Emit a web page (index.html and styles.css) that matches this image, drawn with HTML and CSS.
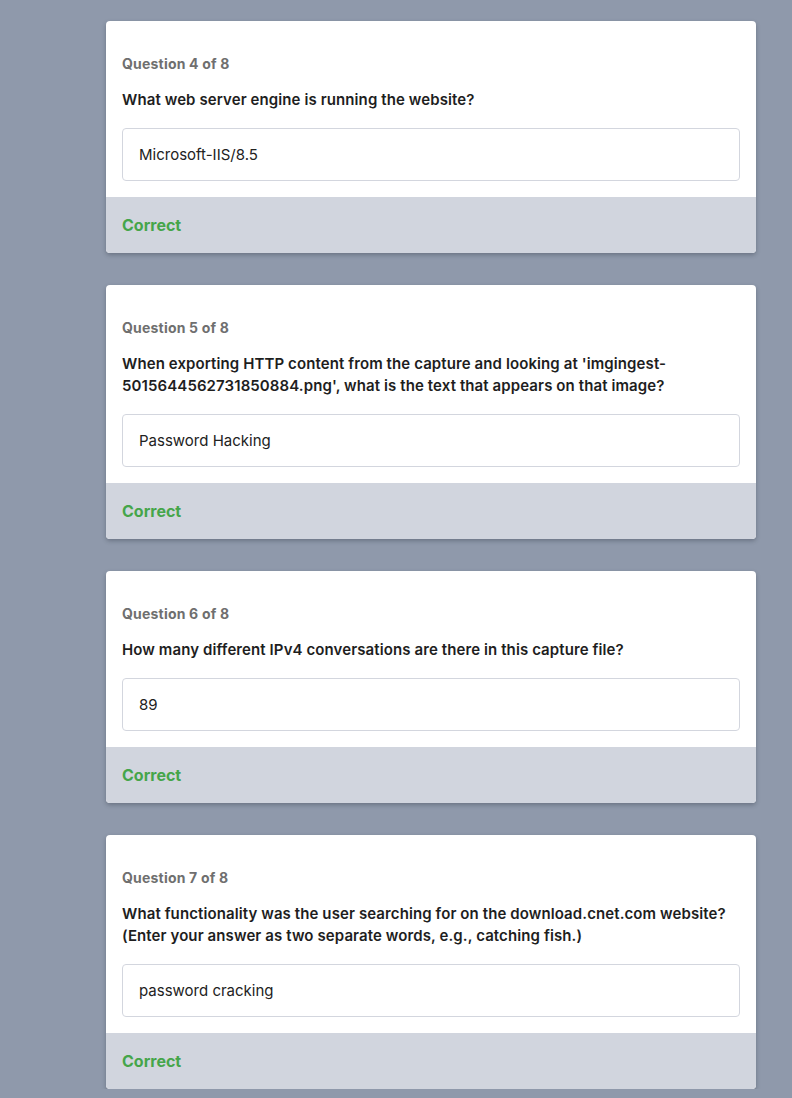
FILE: index.html
```html
<!DOCTYPE html>
<html>
<head>
<meta charset="utf-8">
<link rel="stylesheet" href="styles.css">
</head>
<body>
<div class="list">
  <div class="card">
    <div class="body">
      <div class="label">Question 4 of 8</div>
      <div class="question">What web server engine is running the website?</div>
      <div class="answer">Microsoft-IIS/8.5</div>
    </div>
    <div class="footer">Correct</div>
  </div>
  <div class="card">
    <div class="body">
      <div class="label">Question 5 of 8</div>
      <div class="question">When exporting HTTP content from the capture and looking at 'imgingest-5015644562731850884.png', what is the text that appears on that image?</div>
      <div class="answer">Password Hacking</div>
    </div>
    <div class="footer">Correct</div>
  </div>
  <div class="card">
    <div class="body">
      <div class="label">Question 6 of 8</div>
      <div class="question">How many different IPv4 conversations are there in this capture file?</div>
      <div class="answer">89</div>
    </div>
    <div class="footer">Correct</div>
  </div>
  <div class="card">
    <div class="body">
      <div class="label">Question 7 of 8</div>
      <div class="question">What functionality was the user searching for on the download.cnet.com website? (Enter your answer as two separate words, e.g., catching fish.)</div>
      <div class="answer">password cracking</div>
    </div>
    <div class="footer">Correct</div>
  </div>
</div>
</body>
</html>
```

FILE: styles.css
```css
html, body {
  margin: 0;
  padding: 0;
  background: #8f99ab;
  font-family: Inter, "Noto Sans", sans-serif;
  color: #1f1f1f;
}
.list {
  margin-left: 106px;
  width: 650px;
  padding-top: 21px;
  display: flex;
  flex-direction: column;
  gap: 32px;
}
.card {
  background: #ffffff;
  border-radius: 4px;
  overflow: hidden;
  box-shadow: 0 2px 4px rgba(40, 48, 64, 0.35);
}
.body {
  padding: 33px 16px 16px 16px;
}
.label {
  font-size: 14px;
  line-height: 20px;
  font-weight: 700;
  letter-spacing: 0.2px;
  color: #6f6f6f;
  margin-bottom: 15px;
}
.question {
  font-size: 15px;
  line-height: 22px;
  font-weight: 600;
  letter-spacing: 0.1px;
  color: #1e1e1e;
  margin-bottom: 17px;
}
.answer {
  border: 1px solid #d3d6de;
  border-radius: 4px;
  height: 51px;
  padding: 0 16px;
  display: flex;
  align-items: center;
  font-size: 15px;
  color: #222222;
}
.footer {
  background: #d1d5de;
  padding: 18px 16px;
  font-size: 16px;
  line-height: 20px;
  font-weight: 700;
  color: #45a54a;
}
```
